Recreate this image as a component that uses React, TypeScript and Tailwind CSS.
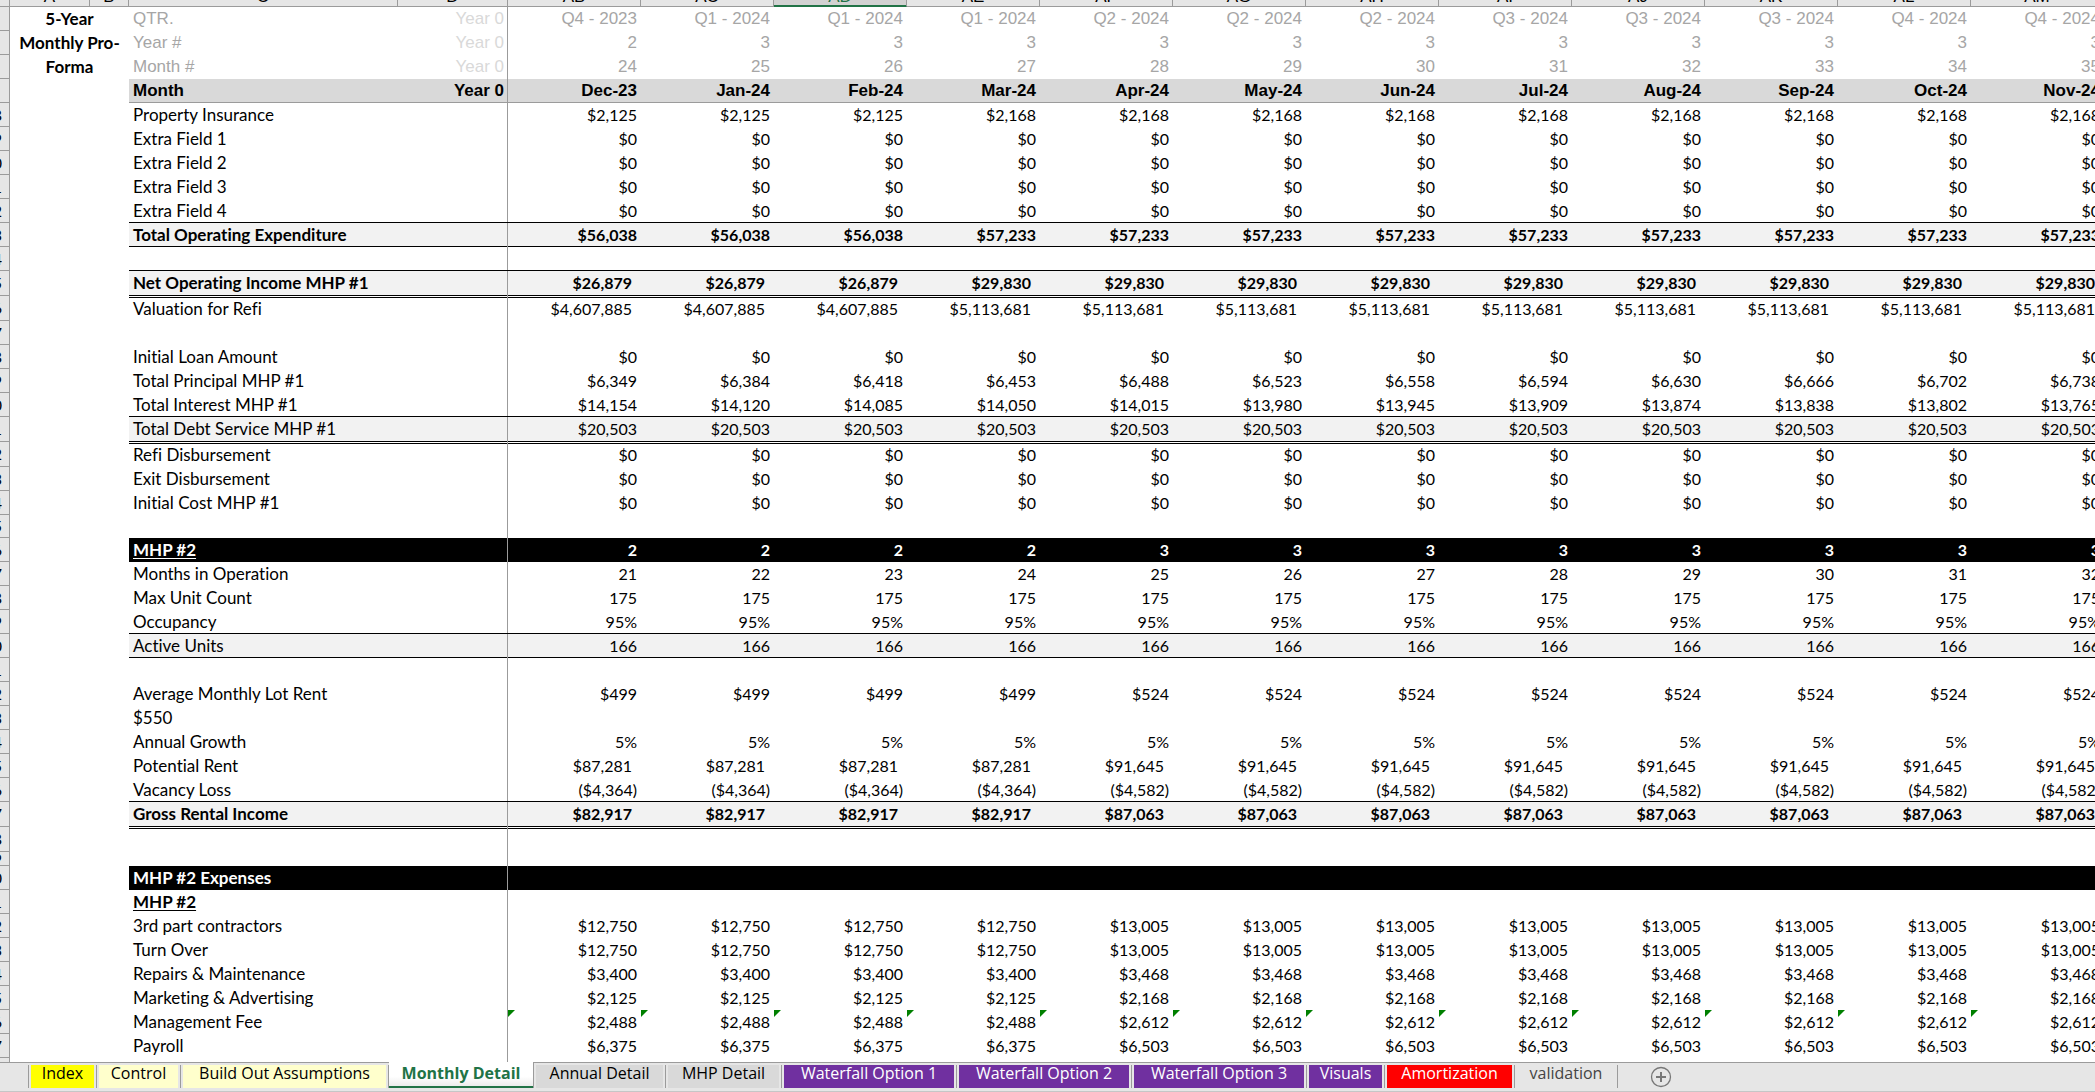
import clsx from 'clsx'

type Row = {
  label?: string
  values?: string[]
  height?: string
  kind?: 'total' | 'double' | 'black'
  bold?: boolean
  underline?: boolean
  accounting?: boolean
  flagged?: boolean
}

const H23 = 'h-[23px]'
const H25 = 'h-[25px]'

const same = (value: string) => Array<string>(12).fill(value)
const step = (first: string, firstCount: number, rest: string) => [
  ...Array<string>(firstCount).fill(first),
  ...Array<string>(12 - firstCount).fill(rest),
]
const count = (from: number) => Array.from({ length: 12 }, (_, i) => String(from + i))

const columnLetters = ['AB', 'AC', 'AD', 'AE', 'AF', 'AG', 'AH', 'AI', 'AJ', 'AK', 'AL', 'AM']

const quarters = [
  'Q4 - 2023', 'Q1 - 2024', 'Q1 - 2024', 'Q1 - 2024', 'Q2 - 2024', 'Q2 - 2024',
  'Q2 - 2024', 'Q3 - 2024', 'Q3 - 2024', 'Q3 - 2024', 'Q4 - 2024', 'Q4 - 2024',
]

const months = [
  'Dec-23', 'Jan-24', 'Feb-24', 'Mar-24', 'Apr-24', 'May-24',
  'Jun-24', 'Jul-24', 'Aug-24', 'Sep-24', 'Oct-24', 'Nov-24',
]

const rows: Row[] = [
  { label: 'Property Insurance', values: step('$2,125', 3, '$2,168') },
  { label: 'Extra Field 1', values: same('$0') },
  { label: 'Extra Field 2', values: same('$0') },
  { label: 'Extra Field 3', values: same('$0') },
  { label: 'Extra Field 4', values: same('$0') },
  { label: 'Total Operating Expenditure', values: step('$56,038', 3, '$57,233'), kind: 'total', bold: true },
  {},
  { label: 'Net Operating Income MHP #1', values: step('$26,879', 3, '$29,830'), kind: 'double', bold: true, accounting: true, height: H25 },
  { label: 'Valuation for Refi', values: step('$4,607,885', 3, '$5,113,681'), accounting: true, height: H25 },
  {},
  { label: 'Initial Loan Amount', values: same('$0') },
  {
    label: 'Total Principal MHP #1',
    values: ['$6,349', '$6,384', '$6,418', '$6,453', '$6,488', '$6,523', '$6,558', '$6,594', '$6,630', '$6,666', '$6,702', '$6,738'],
  },
  {
    label: 'Total Interest MHP #1',
    values: ['$14,154', '$14,120', '$14,085', '$14,050', '$14,015', '$13,980', '$13,945', '$13,909', '$13,874', '$13,838', '$13,802', '$13,765'],
  },
  { label: 'Total Debt Service MHP #1', values: same('$20,503'), kind: 'double', height: H25 },
  { label: 'Refi Disbursement', values: same('$0'), height: H25 },
  { label: 'Exit Disbursement', values: same('$0') },
  { label: 'Initial Cost MHP #1', values: same('$0') },
  { height: H23 },
  { label: 'MHP #2', values: step('2', 4, '3'), kind: 'black', bold: true, underline: true },
  { label: 'Months in Operation', values: count(21) },
  { label: 'Max Unit Count', values: same('175') },
  { label: 'Occupancy', values: same('95%') },
  { label: 'Active Units', values: same('166'), kind: 'total' },
  {},
  { label: 'Average Monthly Lot Rent', values: step('$499', 4, '$524') },
  { label: '$550' },
  { label: 'Annual Growth', values: same('5%') },
  { label: 'Potential Rent', values: step('$87,281', 4, '$91,645'), accounting: true },
  { label: 'Vacancy Loss', values: step('($4,364)', 4, '($4,582)') },
  { label: 'Gross Rental Income', values: step('$82,917', 4, '$87,063'), kind: 'double', bold: true, accounting: true, height: H25 },
  { height: H25 },
  { height: 'h-[14px]' },
  { label: 'MHP #2 Expenses', kind: 'black', bold: true },
  { label: 'MHP #2', bold: true, underline: true },
  { label: '3rd part contractors', values: step('$12,750', 4, '$13,005') },
  { label: 'Turn Over', values: step('$12,750', 4, '$13,005') },
  { label: 'Repairs & Maintenance', values: step('$3,400', 4, '$3,468') },
  { label: 'Marketing & Advertising', values: step('$2,125', 4, '$2,168') },
  { label: 'Management Fee', values: step('$2,488', 4, '$2,612'), flagged: true },
  { label: 'Payroll', values: step('$6,375', 4, '$6,503') },
]

const tabs = [
  { name: 'Index', width: 'w-[68px]', style: 'bg-[#ffff00] text-black' },
  { name: 'Control', width: 'w-[84px]', style: 'bg-[#ffffcc] text-black' },
  { name: 'Build Out Assumptions', width: 'w-[208px]', style: 'bg-[#ffffcc] text-black' },
  { name: 'Monthly Detail', width: 'w-[145px]', style: '', active: true },
  { name: 'Annual Detail', width: 'w-[132px]', style: 'bg-[#d9d9d9] text-black' },
  { name: 'MHP Detail', width: 'w-[116px]', style: 'bg-[#d9d9d9] text-black' },
  { name: 'Waterfall Option 1', width: 'w-[175px]', style: 'bg-[#7030a0] text-white' },
  { name: 'Waterfall Option 2', width: 'w-[175px]', style: 'bg-[#7030a0] text-white' },
  { name: 'Waterfall Option 3', width: 'w-[175px]', style: 'bg-[#7030a0] text-white' },
  { name: 'Visuals', width: 'w-[78px]', style: 'bg-[#7030a0] text-white' },
  { name: 'Amortization', width: 'w-[130px]', style: 'bg-[#ff0000] text-white' },
  { name: 'validation', width: 'w-[103px]', style: 'text-[#444]' },
]

const ColumnHeader = ({ letter, selected }: { letter: string; selected?: boolean }) => (
  <th
    scope="col"
    className={clsx(
      'p-0 border-b border-r border-r-[#9b9b9b] font-normal',
      selected ? 'bg-[#d2d2d2] border-b-[#217346] text-[#217346]' : 'bg-[#e6e6e6] border-b-[#9b9b9b]'
    )}
  >
    {/* scrolled so that only the foot of the letter row is in view */}
    <div className={clsx('flex h-[6px] items-end justify-center overflow-hidden', selected && 'shadow-[inset_0_-1px_0_#217346]')}>
      <span className="block leading-[18px]">{letter}</span>
    </div>
  </th>
)

const RowNumber = ({ value }: { value?: number }) => (
  <th scope="row" className="p-0 bg-[#e6e6e6] border-r border-b border-[#9b9b9b] text-base font-normal">
    <div className="flex w-[2px] justify-end overflow-hidden leading-3">{value}</div>
  </th>
)

const HeadingRow = ({ label, year, values, title }: { label: string; year: string; values: string[]; title?: boolean }) => (
  <tr className="h-6 text-[#a6a6a6]">
    <RowNumber />
    {title && (
      <th
        colSpan={2}
        rowSpan={4}
        scope="rowgroup"
        className="px-1 py-0 align-top text-center leading-6 font-bold whitespace-normal text-black font-[Lato,sans-serif]"
      >
        5-Year Monthly Pro-Forma
      </th>
    )}
    <th scope="row" className="px-1 py-0 text-left font-normal">{label}</th>
    <td className="pl-1 pr-[3px] py-0 text-right text-[#d9d9d9] border-r border-r-[#9b9b9b]">{year}</td>
    {values.map((value, i) => (
      <td key={i} className="pr-1 py-0 text-right">{value}</td>
    ))}
  </tr>
)

const SheetRow = ({ row, number }: { row: Row; number: number }) => {
  const cell = clsx(
    'pt-0',
    row.kind === 'double' ? 'pb-0.5' : 'pb-0',
    row.kind === 'total' && 'bg-[#f2f2f2] shadow-[inset_0_-1px_0_#000,0_-1px_0_#000]',
    row.kind === 'double' && 'bg-[#f2f2f2] shadow-[inset_0_-1px_0_#000,0_-1px_0_#000,0_1px_0_#fff,0_2px_0_#000]',
    row.kind === 'black' && 'bg-black text-white'
  )
  return (
    <tr className={clsx(row.height ?? 'h-6', row.bold && 'font-bold')}>
      <RowNumber value={number} />
      <td colSpan={2} className="p-0" />
      <th scope="row" className={clsx(cell, 'px-1 text-left text-[17px] leading-5', row.bold ? 'font-bold' : 'font-normal')}>
        {row.label && <span className={clsx(row.underline && 'underline underline-offset-2')}>{row.label}</span>}
      </th>
      <td className={clsx(cell, 'border-r border-[#9b9b9b]')} />
      {columnLetters.map((letter, i) => (
        <td key={letter} className={clsx(cell, 'relative text-right', row.accounting ? 'pr-[9px]' : 'pr-1')}>
          {row.flagged && (
            <span className="absolute left-0 top-0 size-[7px] bg-[#008000] [clip-path:polygon(0_0,100%_0,0_100%)]" />
          )}
          {row.values?.[i]}
        </td>
      ))}
    </tr>
  )
}

const SheetTabs = () => (
  <nav className="flex h-[30px] border-t border-b border-t-[#9b9b9b] border-b-[#c6c6c6] bg-[#e6e6e6] pt-[2px] pb-[3px] pl-7 font-['Open_Sans',sans-serif] text-base">
    {tabs.map((tab) => (
      <div
        key={tab.name}
        className={clsx(
          'shrink-0 border-r border-[#9b9b9b] first:border-l first:w-[69px]',
          tab.width,
          tab.active ? '-mt-[3px]' : 'px-[2px]'
        )}
      >
        <button
          className={clsx(
            'flex h-full w-full justify-center whitespace-nowrap leading-4',
            tab.active
              ? 'border-b-2 border-[#217346] bg-linear-to-b from-white from-60% to-[#ececec] pt-[3px] font-bold text-[#217346]'
              : tab.style
          )}
        >
          {tab.name}
        </button>
      </div>
    ))}
    <button aria-label="New sheet" className="ml-8 self-center">
      <svg width="22" height="22" viewBox="0 0 22 22" fill="none" stroke="#777">
        <circle cx="11" cy="11" r="9.5" strokeWidth="1.3" />
        <path d="M11 6v10M6 11h10" strokeWidth="2" />
      </svg>
    </button>
  </nav>
)

export default function App() {
  return (
    <main className="w-full overflow-hidden bg-white text-black">
      <table className="w-[2104px] table-fixed border-separate border-spacing-0 whitespace-nowrap font-[Lato,sans-serif] text-base leading-5 [font-variant-ligatures:none]">
        <colgroup>
          <col className="w-[10px]" />
          <col className="w-[80px]" />
          <col className="w-[39px]" />
          <col className="w-[269px]" />
          <col className="w-[110px]" />
          {columnLetters.map((letter) => (
            <col key={letter} className="w-[133px]" />
          ))}
        </colgroup>
        <thead className="font-['Liberation_Sans',sans-serif] text-[17px]">
          <tr>
            <ColumnHeader letter="" />
            <ColumnHeader letter="A" />
            <ColumnHeader letter="B" />
            <ColumnHeader letter="C" />
            <ColumnHeader letter="D" />
            {columnLetters.map((letter) => (
              <ColumnHeader key={letter} letter={letter} selected={letter === 'AD'} />
            ))}
          </tr>
          <HeadingRow label="QTR." year="Year 0" values={quarters} title />
          <HeadingRow label="Year #" year="Year 0" values={['2', ...Array<string>(11).fill('3')]} />
          <HeadingRow label="Month #" year="Year 0" values={count(24)} />
          <tr className="h-6 font-bold">
            <RowNumber />
            <th scope="row" className="border-b border-[#9b9b9b] bg-[#d9d9d9] px-1 py-0 text-left">Month</th>
            <td className="border-r border-b border-[#9b9b9b] bg-[#d9d9d9] pl-1 pr-[3px] py-0 text-right">Year 0</td>
            {months.map((month) => (
              <th key={month} scope="col" className="border-b border-[#9b9b9b] bg-[#d9d9d9] py-0 pr-1 text-right">{month}</th>
            ))}
          </tr>
        </thead>
        <tbody>
          {rows.map((row, i) => (
            <SheetRow key={i} row={row} number={(i + 8) % 10} />
          ))}
          <tr className="h-[4px]">
            <td className="border-r border-[#9b9b9b] bg-[#e6e6e6] p-0" />
            <td colSpan={3} className="p-0" />
            <td className="border-r border-[#9b9b9b] p-0" />
          </tr>
        </tbody>
      </table>
      <SheetTabs />
    </main>
  )
}
